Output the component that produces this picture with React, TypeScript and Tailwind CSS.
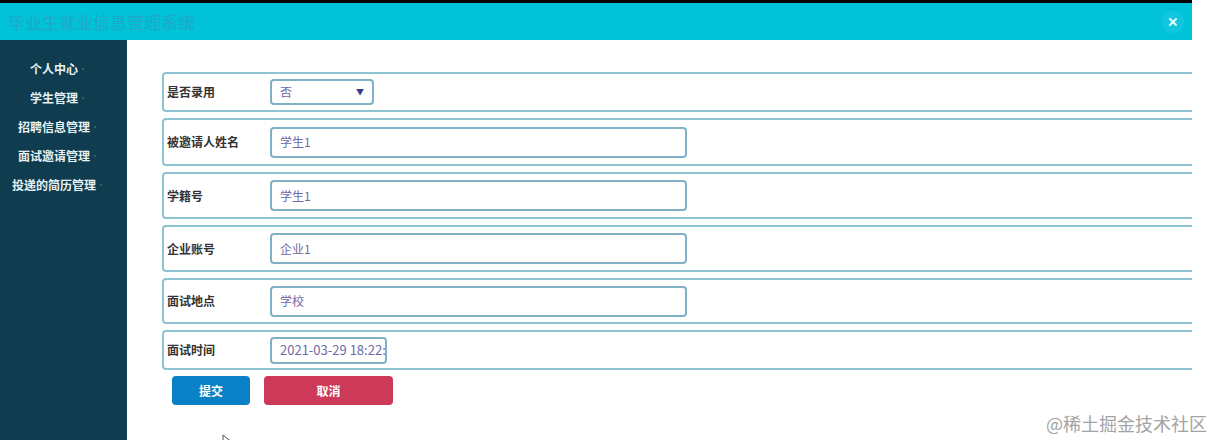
import { X } from "lucide-react";

const menu = ["个人中心", "学生管理", "招聘信息管理", "面试邀请管理", "投递的简历管理"];

const font = { fontFamily: '"Noto Sans CJK SC", "Noto Sans", sans-serif' };

function Row({ label, h, children }: { label: string; h: string; children: React.ReactNode }) {
  return (
    <div className={`flex items-center w-[1100px] ${h} border-2 border-[#8ec3d3] rounded-[4px] shrink-0`}>
      <div className="w-[106px] pl-[3px] text-[12px] font-semibold text-[#333]">{label}</div>
      {children}
    </div>
  );
}

function TextInput({ value }: { value: string }) {
  return (
    <div className="w-[417px] h-[31px] border-2 border-[#7fb0c6] rounded-[4px] flex items-center px-[8px] text-[12px] text-[#6d6aa6]">
      {value}
    </div>
  );
}

export default function App() {
  return (
    <div className="w-[1214px] h-[440px] bg-white flex" style={font}>
      <div className="w-[1192px] h-[440px] shrink-0 flex flex-col overflow-hidden">
        {/* 상단 */}
        <div className="h-[3px] bg-black" />
        <div className="h-[37px] bg-[#00c3da] flex items-center justify-between pl-[8px] pr-[8px]">
          <span className="text-[17px] text-[#22a6c6]">毕业生就业信息管理系统</span>
          <div className="w-[22px] h-[22px] rounded-full bg-[#12c7dd] flex items-center justify-center">
            <X size={12} strokeWidth={4} className="text-[#eafcff]" />
          </div>
        </div>

        <div className="flex flex-1 min-w-0">
          {/* 사이드바 */}
          <div className="w-[127px] shrink-0 bg-[#0f3c4e] flex flex-col pt-[20px] gap-[11px]">
            {menu.map((m) => (
              <div key={m} className="w-[114px] flex justify-center items-center h-[18px] text-[12px] font-semibold text-[#e6f1f3]">
                {m}
                <span className="ml-[4px] w-[2px] h-[2px] rounded-full bg-[#3d6c7c]" />
              </div>
            ))}
          </div>

          {/* 폼 */}
          <div className="flex-1 min-w-0 pl-[35px] pt-[32px] flex flex-col gap-[6px] relative">
            <Row label="是否录用" h="h-[40px]">
              <div className="w-[104px] h-[26px] border-2 border-[#7fb0c6] rounded-[4px] flex items-center justify-between px-[8px] text-[12px] text-[#6d6aa6]">
                <span>否</span>
                <span className="text-[8px] text-[#3a3a8c]">▼</span>
              </div>
            </Row>
            <Row label="被邀请人姓名" h="h-[48px]">
              <TextInput value="学生1" />
            </Row>
            <Row label="学籍号" h="h-[47px]">
              <TextInput value="学生1" />
            </Row>
            <Row label="企业账号" h="h-[47px]">
              <TextInput value="企业1" />
            </Row>
            <Row label="面试地点" h="h-[46px]">
              <TextInput value="学校" />
            </Row>
            <Row label="面试时间" h="h-[40px]">
              <div className="w-[117px] h-[27px] border-2 border-[#7fb0c6] rounded-[4px] flex items-center pl-[8px] overflow-hidden whitespace-nowrap text-[13px] text-[#6d6aa6]">
                2021-03-29 18:22:
              </div>
            </Row>

            <div className="flex gap-[14px] pl-[10px]">
              <button className="w-[78px] h-[29px] rounded-[4px] bg-[#0a80c6] text-white text-[12px] font-semibold">提交</button>
              <button className="w-[129px] h-[29px] rounded-[4px] bg-[#cd3a59] text-white text-[12px] font-semibold">取消</button>
            </div>

            <svg className="absolute left-[95px] top-[394px]" width="10" height="12" viewBox="0 0 10 12">
              <path d="M1 1 L1 10 L3.5 7.5 L6 11 L7 10.5 L5 7 L8.5 7 Z" fill="white" stroke="#555" strokeWidth="1" />
            </svg>
          </div>
        </div>
      </div>

      <div className="flex-1 relative">
        <span className="absolute right-[7px] top-[410px] whitespace-nowrap text-[18px] text-[#a3a3a3]">@稀土掘金技术社区</span>
      </div>
    </div>
  );
}
